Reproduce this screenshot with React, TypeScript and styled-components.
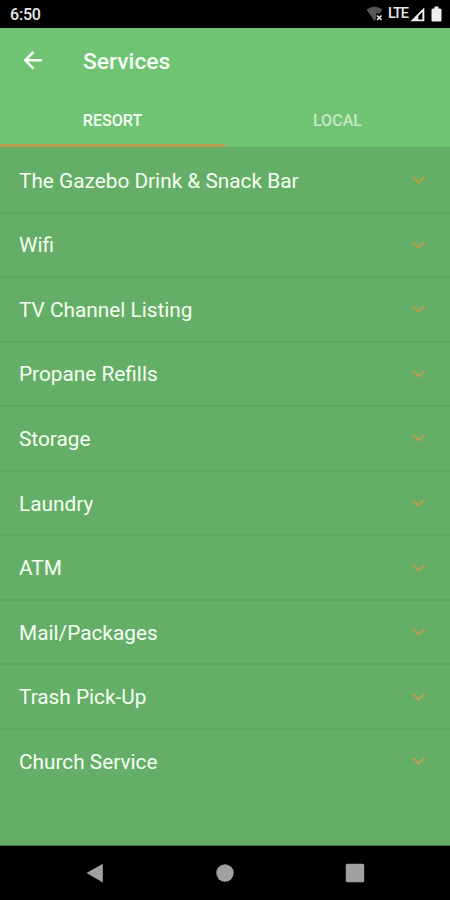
import React from "react";
import styled, { createGlobalStyle } from "styled-components";

const GlobalStyle = createGlobalStyle`
  * { box-sizing: border-box; }
  body { margin: 0; background: #000; }
  button { border: 0; padding: 0; background: none; font: inherit; color: inherit; }
`;

const Screen = styled.div`
  width: 450px;
  height: 900px;
  display: flex;
  flex-direction: column;
  overflow: hidden;
  background: #65ae67;
  color: #f5fff3;
  font-family: Roboto, "Liberation Sans", sans-serif;
`;

const StatusBar = styled.div`
  height: 28px;
  flex: none;
  display: flex;
  align-items: center;
  justify-content: space-between;
  padding: 1px 8px 0 10px;
  background: #000;
  color: #e8e8e8;
`;

const Clock = styled.span`
  font-size: 16px;
  font-weight: 500;
  line-height: 20px;
  letter-spacing: -0.2px;
`;

const StatusIcons = styled.div`
  display: flex;
  align-items: center;
  padding-bottom: 1px;
  line-height: 20px;
  svg { display: block; }
`;

const Network = styled.span`
  width: 21px;
  margin: 0 1px 0 5px;
  font-weight: 500;
  font-size: 14.5px;
  letter-spacing: -1.1px;
`;

const Header = styled.header`
  height: 120px;
  flex: none;
  display: flex;
  flex-direction: column;
  background: #70c373;
`;

const Toolbar = styled.div`
  height: 66px;
  display: flex;
  align-items: center;
  padding-left: 23px;
`;

const BackButton = styled.button`
  width: 20px;
  height: 20px;
  svg { display: block; }
`;

const Title = styled.h1`
  margin: 2px 0 0 40px;
  font-size: 22.8px;
  line-height: 28px;
  font-weight: 500;
`;

const Tabs = styled.div`
  flex: 1;
  display: grid;
  grid-template-columns: 1fr 1fr;
  border-bottom: 1px solid #62a861;
`;

const Tab = styled.button<{ $active?: boolean }>`
  border-bottom: 3px solid ${({ $active }) => ($active ? "#b79b50" : "transparent")};
  color: ${({ $active }) => ($active ? "#f5fff3" : "#c3e9c0")};
  font-size: 16.1px;
  line-height: 20px;
  font-weight: 500;
  padding-top: 3px;
`;

const List = styled.main`
  flex: 1;
  display: flex;
  flex-direction: column;
  padding-top: 1px;
  border-bottom: 1px solid #3c713f;
`;

const Row = styled.button`
  height: 64.56px;
  flex: none;
  display: flex;
  align-items: center;
  justify-content: space-between;
  padding: 0 24px 0 19px;
  border-bottom: 2px solid #5fa560;
  font-size: 20.8px;
  line-height: 26px;
  text-align: left;
  &:last-child { border-bottom-color: transparent; }
  svg { display: block; }
`;

const RowLabel = styled.span`
  padding-top: 1px;
`;

const NavBar = styled.nav`
  height: 54px;
  flex: none;
  display: flex;
  align-items: center;
  justify-content: space-between;
  padding: 0 85px 0 86px;
  background: #000;
  svg { display: block; }
`;

const services = [
  "The Gazebo Drink & Snack Bar",
  "Wifi",
  "TV Channel Listing",
  "Propane Refills",
  "Storage",
  "Laundry",
  "ATM",
  "Mail/Packages",
  "Trash Pick-Up",
  "Church Service",
];

const Chevron = () => (
  <svg width="15" height="10" viewBox="0 0 15 10" fill="none" stroke="#b79f4d" strokeWidth="2.2">
    <path d="M1.8 2L7.5 7.5L13.2 2" />
  </svg>
);

export default function App() {
  return (
    <Screen>
      <GlobalStyle />
      <StatusBar>
        <Clock>6:50</Clock>
        <StatusIcons>
          <svg width="17" height="16" viewBox="0 0 17 16">
            <path d="M0.5 3.5Q8.5-2 16.5 3.5L13.5 7.5H10V13L8.5 15Z" fill="#555" />
            <path d="M11 9.5L15.5 14M15.5 9.5L11 14" stroke="#eee" strokeWidth="1.6" />
          </svg>
          <Network>LTE</Network>
          <svg width="15" height="15" viewBox="0 0 15 15">
            <path d="M14.3 0.5V14.3H0.5Z" fill="#eee" />
            <path d="M12.4 5V12.5H8.3V9.1Z" fill="#000" />
          </svg>
          <svg width="17" height="16" viewBox="0 0 17 16">
            <path d="M9.5 0.5H13.5V2.5H15Q16.5 2.5 16.5 4V14.5Q16.5 15.5 15.5 15.5H7.5Q6.5 15.5 6.5 14.5V4Q6.5 2.5 8 2.5H9.5Z" fill="#eee" />
          </svg>
        </StatusIcons>
      </StatusBar>
      <Header>
        <Toolbar>
          <BackButton aria-label="Back">
            <svg width="20" height="20" viewBox="0 0 20 20" fill="none" stroke="#f5fff3" strokeWidth="2.5">
              <path d="M19 9.3H2.2M10.5 1L2.2 9.3L10.5 17.6" />
            </svg>
          </BackButton>
          <Title>Services</Title>
        </Toolbar>
        <Tabs>
          <Tab $active>RESORT</Tab>
          <Tab>LOCAL</Tab>
        </Tabs>
      </Header>
      <List>
        {services.map((name) => (
          <Row key={name}>
            <RowLabel>{name}</RowLabel>
            <Chevron />
          </Row>
        ))}
      </List>
      <NavBar>
        <svg width="18" height="20" viewBox="0 0 18 20">
          <path d="M16.8 0.7V19.5L0.5 10Z" fill="#a0a0a0" />
        </svg>
        <svg width="18" height="18" viewBox="0 0 18 18">
          <circle cx="9" cy="9" r="8.7" fill="#a0a0a0" />
        </svg>
        <svg width="20" height="20" viewBox="0 0 20 20">
          <rect x="0.8" y="0.8" width="18.4" height="18.4" rx="1.5" fill="#a0a0a0" />
        </svg>
      </NavBar>
    </Screen>
  );
}
